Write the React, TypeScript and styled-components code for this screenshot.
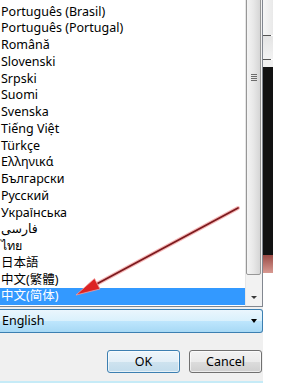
import * as React from 'react';
import styled, { createGlobalStyle } from 'styled-components';

const GlobalStyle = createGlobalStyle`
    html, body {
        margin: 0;
        padding: 0;
        background: #ffffff;
    }
    body {
        font-family: "Noto Sans", "DejaVu Sans", "Noto Sans CJK SC", sans-serif;
        font-size: 12.5px;
        color: #000000;
    }
`;

const languages: string[] = [
    'Português (Brasil)',
    'Português (Portugal)',
    'Română',
    'Slovenski',
    'Srpski',
    'Suomi',
    'Svenska',
    'Tiếng Việt',
    'Türkçe',
    'Ελληνικά',
    'Български',
    'Русский',
    'Українська',
    'فارسی',
    'ไทย',
    '日本語',
    '中文(繁體)',
    '中文(简体)',
];

const Screen = styled.div`
    position: relative;
    width: 282px;
    height: 383px;
    overflow: hidden;
    display: flex;
    background: #ffffff;
`;

const Dialog = styled.div`
    width: 263px;
    height: 383px;
    display: flex;
    flex-direction: column;
    background: #f0f0f0;
`;

const ListBox = styled.div`
    height: 306px;
    display: flex;
    background: #ffffff;
    border-right: 1px solid #828790;
    border-bottom: 1px solid #828790;
    overflow: hidden;
`;

const Items = styled.ul`
    flex: 1;
    margin: 0;
    padding: 3.5px 0 0 0;
    list-style: none;
`;

type ItemProps = {
    $selected: boolean;
}

const Item = styled.li<ItemProps>`
    height: 16.75px;
    line-height: 16.75px;
    padding-left: 1px;
    white-space: nowrap;
    color: ${({ $selected }) => $selected ? '#ffffff' : '#000000'};
    background: ${({ $selected }) => $selected ? '#3399ff' : 'transparent'};
`;

const ScrollBar = styled.div`
    width: 16px;
    display: flex;
    flex-direction: column;
    background: #f2f2f2;
    border-left: 1px solid #e6e6e6;
    overflow: hidden;
`;

const Thumb = styled.div`
    margin-top: -121px;
    height: 394px;
    margin-right: 1px;
    display: flex;
    align-items: center;
    justify-content: center;
    border: 1px solid #979797;
    border-radius: 2px;
    background: linear-gradient(to right, #f4f4f4 0%, #e8e8e8 50%, #d6d6d6 100%);
    flex-shrink: 0;
`;

const Grip = styled.span`
    width: 6px;
    height: 7px;
    background: repeating-linear-gradient(to bottom, #6d6d6d 0, #6d6d6d 1px, transparent 1px, transparent 2px);
`;

const Track = styled.div`
    flex: 1;
`;

const ArrowButton = styled.div`
    height: 17px;
    display: flex;
    align-items: center;
    justify-content: center;
    flex-shrink: 0;
`;

const DownTriangle = styled.span`
    width: 0;
    height: 0;
    border-left: 3px solid transparent;
    border-right: 3px solid transparent;
    border-top: 3px solid #3a3a3a;
`;

const Combo = styled.div`
    margin-top: 2px;
    height: 22px;
    display: flex;
    align-items: center;
    justify-content: space-between;
    padding: 0 5px 0 2px;
    border: 1px solid #3c7fb1;
    border-left: none;
    border-radius: 0 3px 3px 0;
    background: linear-gradient(to bottom, #eaf6fd 0%, #d9f0fc 50%, #bee6fd 50%, #a7d9f5 100%);
`;

const ComboText = styled.span`
    line-height: 22px;
`;

const ComboArrow = styled.span`
    width: 0;
    height: 0;
    border-left: 3.5px solid transparent;
    border-right: 3.5px solid transparent;
    border-top: 4px solid #000000;
`;

const ButtonRow = styled.div`
    margin-top: 17px;
    display: flex;
    justify-content: flex-end;
    gap: 9px;
    padding-right: 1px;
`;

type ButtonProps = {
    $default?: boolean;
}

const Button = styled.button<ButtonProps>`
    width: 73px;
    height: 23px;
    padding: 0;
    font-family: inherit;
    font-size: 12.5px;
    color: #000000;
    border-radius: 3px;
    border: 1px solid ${({ $default }) => $default ? '#3c7fb1' : '#707070'};
    background: ${({ $default }) => $default
        ? 'linear-gradient(to bottom, #eef6fb 0%, #e3eff7 50%, #cfe3ef 50%, #c2dcec 100%)'
        : 'linear-gradient(to bottom, #f2f2f2 0%, #ebebeb 50%, #dddddd 50%, #cfcfcf 100%)'};
    box-shadow: inset 0 0 0 1px rgba(255, 255, 255, 0.6);
`;

const Spacer = styled.div`
    flex: 1;
`;

const BottomEdge = styled.div`
    height: 2px;
    background: #c6ebf7;
`;

const SideStrip = styled.div`
    width: 10px;
    height: 273px;
    display: flex;
    flex-direction: column;
`;

type StripBlockProps = {
    $h: number;
    $bg: string;
}

const StripBlock = styled.div<StripBlockProps>`
    height: ${({ $h }) => $h}px;
    background: ${({ $bg }) => $bg};
    flex-shrink: 0;
`;

const StripLine = styled.div`
    height: 1px;
    margin-right: 2px;
    background: #555555;
`;

const Pointer = styled.svg`
    position: absolute;
    left: 0;
    top: 0;
    pointer-events: none;
`;

const App: React.FC = () => {
    return (
        <>
            <GlobalStyle />
            <Screen>
                <Dialog>
                    <ListBox>
                        <Items>
                            {languages.map(lang =>
                                <Item key={lang} $selected={lang === '中文(简体)'}>{lang}</Item>)}
                        </Items>
                        <ScrollBar>
                            <Thumb><Grip /></Thumb>
                            <Track />
                            <ArrowButton><DownTriangle /></ArrowButton>
                        </ScrollBar>
                    </ListBox>
                    <Combo>
                        <ComboText>English</ComboText>
                        <ComboArrow />
                    </Combo>
                    <ButtonRow>
                        <Button $default>OK</Button>
                        <Button>Cancel</Button>
                    </ButtonRow>
                    <Spacer />
                    <BottomEdge />
                </Dialog>
                <SideStrip>
                    <StripBlock $h={35} $bg="linear-gradient(to right, #f6f6f6, #e9e9e9)" />
                    <StripLine />
                    <StripBlock $h={23} $bg="linear-gradient(to bottom, #e4e4e4, #f2f2f2)" />
                    <StripLine />
                    <StripBlock $h={7} $bg="#f0f0f0" />
                    <StripBlock $h={188} $bg="#121212" />
                    <StripBlock $h={18} $bg="linear-gradient(to bottom, #9a4a45, #d89a92)" />
                </SideStrip>
                <Pointer width="282" height="383" viewBox="0 0 282 383">
                    <line x1="238" y1="208" x2="92" y2="286.5" stroke="#f6b8b8" strokeWidth="4" strokeLinecap="round" />
                    <line x1="238" y1="208" x2="92" y2="286.5" stroke="#7c1a1e" strokeWidth="1.8" strokeLinecap="round" />
                    <polygon points="76,295 100,289 94.5,278.5" fill="#dc2424" stroke="#f3a0a0" strokeWidth="0.8" />
                </Pointer>
            </Screen>
        </>
    );
};

export default App;
